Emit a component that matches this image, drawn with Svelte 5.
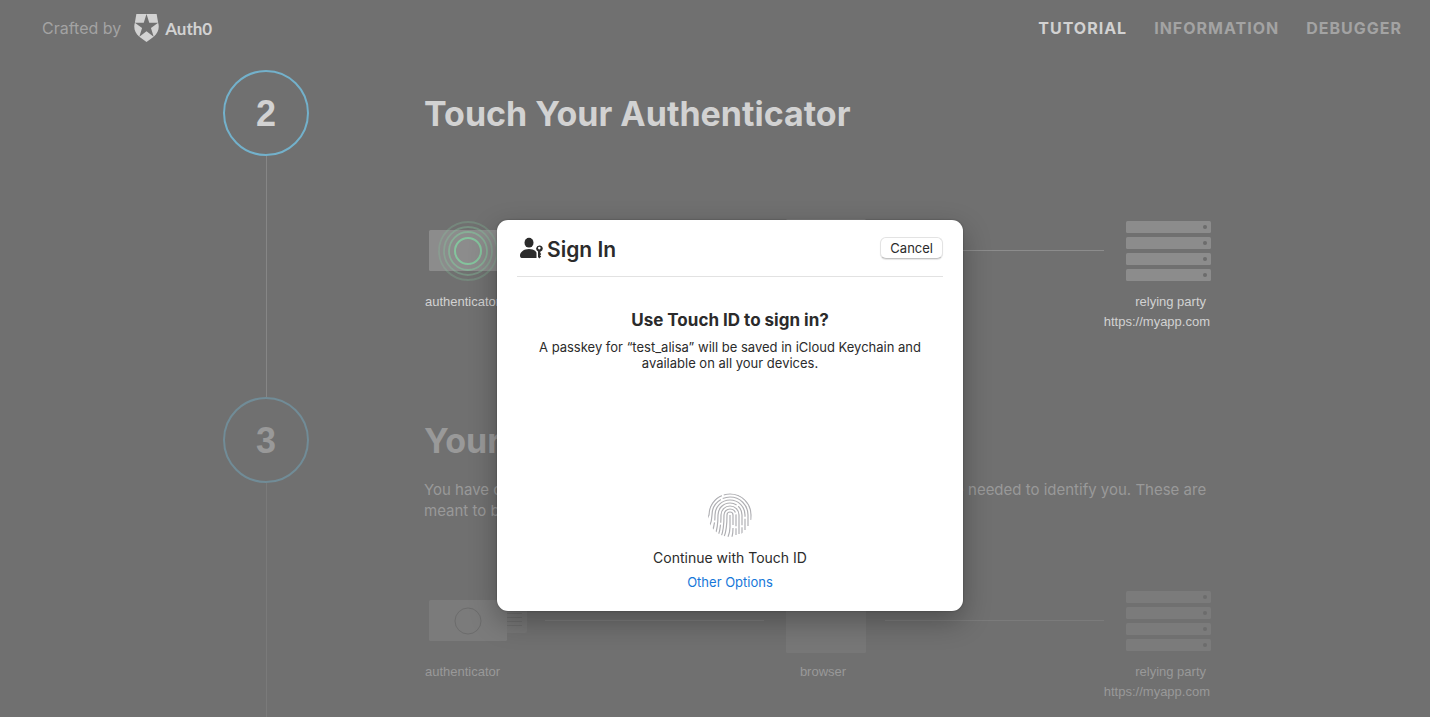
<script>
  const links = ['Tutorial', 'Information', 'Debugger'];
  const steps = [
    { number: 2, title: 'Touch Your Authenticator', active: true, text: '' },
    {
      number: 3,
      title: 'Your Credential',
      active: false,
      text: 'You have created a credential. Below is a short list of the raw values that are needed to identify you. These are meant to be kept by the relying party.'
    }
  ];
  const racks = [0, 16, 32, 48];
  const ridges = [
    { r: 3, left: 44, right: 32, dash: '200' },
    { r: 6, left: 44, right: 42, dash: '38 2 12 2 200' },
    { r: 9, left: 43, right: 41, dash: '12 2 200' },
    { r: 12, left: 42, right: 41, dash: '46 2 20 2 200' },
    { r: 15, left: 39, right: 37, dash: '10 2 54 2 200' },
    { r: 18, left: 35, right: 33, dash: '32 2 200' },
    { r: 21, left: 29, right: 27, dash: '32 2 200' }
  ];
</script>

<div class="page">
  <header class="top">
    <a class="brand" href="#auth0">
      <span>Crafted by</span>
      <svg width="25" height="28" viewBox="1.4 0 21.2 24" aria-hidden="true">
        <path fill="currentColor" d="M21.98 7.448L20.700 0H3.300L2.020 7.448c-1.352 4.312.03 9.206 3.815 12.015L12.007 24l6.157-4.552c3.755-2.81 5.182-7.688 3.815-12.015l-6.16 4.58 2.343 7.45-6.157-4.597-6.158 4.58 2.358-7.433-6.188-4.55 7.63-.045L12.008 0l2.356 7.404 7.615.044z" />
      </svg>
      <strong>Auth0</strong>
    </a>
    <nav>
      {#each links as link, i}
        <a href="#{link.toLowerCase()}" class:current={i === 0}>{link}</a>
      {/each}
    </nav>
  </header>

  <main>
    {#each steps as step}
      <section class="step" class:dim={!step.active}>
        <div class="rail"><span class="circle">{step.number}</span></div>
        <div class="content">
          <h2>{step.title}</h2>
          {#if step.text}<p>{step.text}</p>{/if}
          <div class="diagram">
            <svg width="103" height="64" viewBox="0 0 103 64" aria-hidden="true">
              <rect class="shape" x="5" y="11" width="78" height="41" rx="1.5" />
              <path class="shape" d="M83 19h18a2 2 0 0 1 2 2v21a2 2 0 0 1-2 2H83z" opacity=".5" />
              <path class="detail" d="M83 24.500h15M83 28.500h15M83 32.500h15M83 36.500h15" />
              {#if step.active}
                <g class="pulse">
                  <circle cx="44" cy="32" r="13" stroke-width="2" />
                  <circle cx="44" cy="32" r="19" stroke-width="1.800" opacity=".6" />
                  <circle cx="44" cy="32" r="24" stroke-width="1.800" opacity=".4" />
                  <circle cx="44" cy="32" r="29" stroke-width="1.800" opacity=".28" />
                </g>
              {:else}
                <circle class="detail" cx="44" cy="32" r="13" />
              {/if}
            </svg>
            <span class="wire"></span>
            <svg width="80" height="64" viewBox="0 0 80 64" aria-hidden="true">
              <rect class="shape" width="80" height="64" rx="1.500" opacity=".65" />
            </svg>
            <span class="wire"></span>
            <svg width="85" height="60" viewBox="0 0 85 60" aria-hidden="true">
              {#each racks as y}
                <rect class="shape" {y} width="85" height="12" rx="1.500" />
                <circle class="led" cx="79" cy={y + 6} r="2" />
              {/each}
            </svg>
            <span class="label first">authenticator</span>
            <span class="label middle">browser</span>
            <span class="label last"><span class="role">relying party</span><span>https://myapp.com</span></span>
          </div>
        </div>
      </section>
    {/each}
  </main>

  <div class="dialog" role="dialog" aria-labelledby="dialog-title">
    <div class="dialog-head">
      <svg width="24" height="22" viewBox="0 0 24 22" aria-hidden="true">
        <g fill="#2b2b2b">
          <ellipse cx="10" cy="5.700" rx="4.500" ry="4.900" />
          <path d="M1 18.800c0-4 4-6.800 9-6.800 2.600 0 4.900.8 6.500 2 .2.700.6 1.200 1 1.600V21H2.700C1.600 21 1 19.800 1 18.800z" />
          <path fill-rule="evenodd" d="M20.300 8.400a3.200 3.200 0 0 0-1.300 6.100V20l1.300 1.500 1.900-1.900-1.100-1.200 1.100-1.300-.9-1.100v-1.300a3.200 3.200 0 0 0-1-6.300zm0 1.400a1.300 1.300 0 1 1 0 2.600 1.300 1.300 0 0 1 0-2.600z" />
        </g>
      </svg>
      <h1 id="dialog-title">Sign In</h1>
      <button type="button" class="cancel">Cancel</button>
    </div>
    <div class="dialog-text">
      <h3>Use Touch ID to sign in?</h3>
      <p>A passkey for “test_alisa” will be saved in iCloud Keychain and available on all your devices.</p>
    </div>
    <div class="dialog-foot">
      <svg width="46" height="46" viewBox="-1 -1 46 46" aria-hidden="true">
        <defs><clipPath id="print"><circle cx="22" cy="22" r="22" /></clipPath></defs>
        <g clip-path="url(#print)" fill="none" stroke="#b0b0b4" stroke-width="1.200">
          {#each ridges as { r, left, right, dash }}
            <path
              stroke-dasharray={dash}
              d="M{22 - r - 3} {left}Q{22 - r} {left - 7} {22 - r} 22A{r} {r} 0 0 1 {22 + r} 22V{right}"
            />
          {/each}
          <path d="M22 22v12q0 5-2 10M25 35q0 5-1 9" />
        </g>
      </svg>
      <span class="continue">Continue with Touch ID</span>
      <button type="button" class="options">Other Options</button>
    </div>
  </div>
</div>

<style>
  :global(body) {
    background: #707070;
  }
  .page {
    position: relative;
    height: 100vh;
    overflow: hidden;
    background: #707070;
    color: #d2d2d2;
    font-family: Inter, sans-serif;
  }
  .top {
    display: flex;
    align-items: center;
    justify-content: space-between;
    height: 56px;
    padding: 0 28px 0 42px;
  }
  .top a {
    color: #a3a3a3;
    text-decoration: none;
  }
  .brand {
    display: flex;
    align-items: center;
    font-size: 16px;
  }
  .brand svg {
    margin: 0 6px 0 13px;
    color: #d2d2d2;
  }
  .brand strong {
    color: #d2d2d2;
    font-family: Lato, sans-serif;
    font-size: 17px;
  }
  nav {
    display: flex;
    gap: 27px;
    font-size: 16px;
    font-weight: 700;
    letter-spacing: 1px;
    text-transform: uppercase;
  }
  nav .current {
    color: #d2d2d2;
  }
  main {
    max-width: 988px;
    margin: 0 auto;
    padding: 14px 0 0 4px;
  }
  .step {
    display: grid;
    grid-template-columns: 86px 1fr;
    gap: 115px;
  }
  .rail {
    display: flex;
    flex-direction: column;
    align-items: center;
  }
  .rail::after {
    content: '';
    flex: 1;
    width: 1px;
    background: #868686;
  }
  .circle {
    display: flex;
    align-items: center;
    justify-content: center;
    box-sizing: border-box;
    width: 86px;
    height: 86px;
    padding-top: 2px;
    border: 2px solid #73b1cb;
    border-radius: 50%;
    font-family: "Liberation Sans", Arial, sans-serif;
    font-size: 36px;
    font-weight: 700;
  }
  .content {
    padding: 22px 0 65px;
  }
  h1,
  h2,
  h3,
  p {
    margin: 0;
  }
  h2 {
    font-size: 34px;
    line-height: 44px;
  }
  .content p {
    margin-top: 16px;
    font-size: 15px;
    line-height: 21px;
  }
  .diagram {
    display: grid;
    grid-template-columns: 103px 1fr 81px 1fr 85px;
    column-gap: 18px;
    row-gap: 9px;
    align-items: center;
    margin-top: 83px;
  }
  p + .diagram {
    margin-top: 68px;
  }
  .diagram svg {
    display: block;
  }
  .shape {
    fill: #8c8c8c;
  }
  .led {
    fill: #6c6c6c;
  }
  .detail {
    fill: none;
    stroke: #6c6c6c;
  }
  .pulse {
    fill: none;
    stroke: #84c49d;
  }
  .wire {
    height: 1px;
    margin: 0 4px 1px 0;
    background: #8c8c8c;
  }
  .label {
    font-family: "Liberation Sans", Arial, sans-serif;
    font-size: 13px;
    line-height: 20px;
    white-space: nowrap;
  }
  .first {
    align-self: start;
    padding-left: 1px;
  }
  .middle {
    grid-column: 3;
    align-self: start;
    padding-right: 7px;
    text-align: center;
  }
  .last {
    display: flex;
    flex-direction: column;
    grid-column: 5;
    align-items: flex-end;
    padding-right: 1px;
  }
  .role {
    padding-right: 4px;
  }
  .dim h2,
  .dim p,
  .dim .circle,
  .dim .label {
    color: #999;
  }
  .dim .circle {
    border-color: #718c97;
  }
  .dim .rail::after {
    background: #7a7a7a;
  }
  .dim .shape {
    fill: #7b7b7b;
  }
  .dim .wire {
    background: #7b7b7b;
  }
  .dialog {
    position: absolute;
    top: 220px;
    left: calc(50% + 15px);
    box-sizing: border-box;
    display: flex;
    flex-direction: column;
    width: 466px;
    min-height: 391px;
    padding: 0 20px;
    transform: translateX(-50%);
    border-radius: 11px;
    background: #fff;
    box-shadow: 0 10px 28px rgba(0, 0, 0, 0.3), 0 0 2px rgba(0, 0, 0, 0.35);
    color: #2b2b2b;
  }
  .dialog-head {
    display: flex;
    align-items: center;
    height: 56px;
    padding-left: 2px;
    border-bottom: 1px solid #e2e2e2;
  }
  h1 {
    flex: 1;
    margin-left: 4px;
    padding-top: 4px;
    font-size: 21px;
    font-weight: 600;
    line-height: 28px;
  }
  button {
    font-family: inherit;
    font-size: 13px;
    line-height: 16px;
    cursor: pointer;
  }
  .cancel {
    padding: 2px 9px;
    border: 1px solid #e3e3e3;
    border-bottom-color: #c4c4c4;
    border-radius: 6px;
    background: #fff;
    box-shadow: 0 1px 1px rgba(0, 0, 0, 0.1);
    color: #2b2b2b;
  }
  .dialog-text {
    padding-top: 32px;
    text-align: center;
  }
  h3 {
    margin-bottom: 8px;
    font-size: 17px;
    line-height: 22px;
  }
  .dialog-text p {
    font-size: 13px;
    line-height: 16px;
  }
  .dialog-foot {
    display: flex;
    flex-direction: column;
    align-items: center;
    margin-top: auto;
    padding-bottom: 21px;
  }
  .continue {
    margin-top: 10px;
    font-size: 14px;
    line-height: 20px;
  }
  .options {
    margin-top: 6px;
    padding: 0;
    border: 0;
    background: none;
    color: #1677d9;
  }
</style>
